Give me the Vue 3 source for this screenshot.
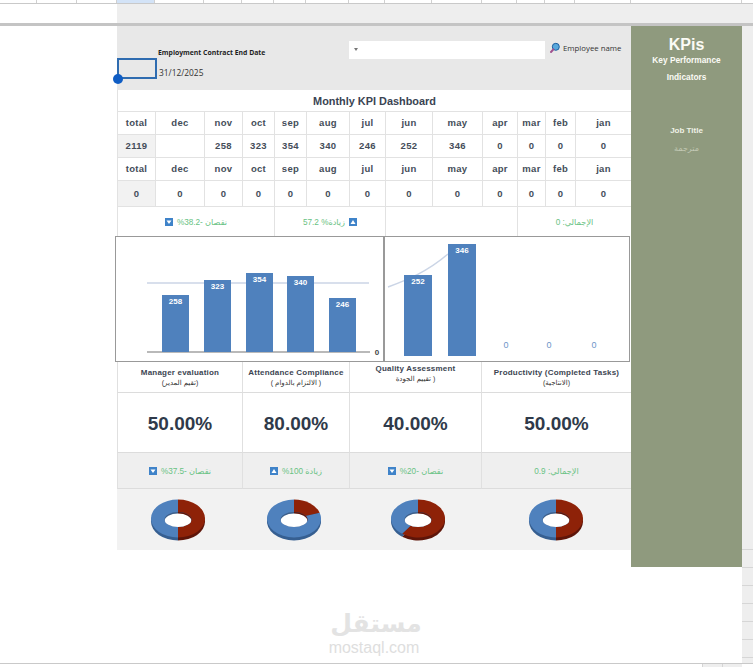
<script setup>
const months = ['total','dec','nov','oct','sep','aug','jul','jun','may','apr','mar','feb','jan']
const row1 = ['2119','','258','323','354','340','246','252','346','0','0','0','0']
const row2 = ['0','0','0','0','0','0','0','0','0','0','0','0','0']
const rulerCols = [37,40,40,38,49,38,32,32,43,36,47,50,35,28,30,56,111]
const kpis = [
  { en:'Manager evaluation', ar:'(تقيم المدير)', val:'50.00%', delta:'نقصان -37.5%', icon:'down', span:'s125', dn:'d0', frac:0.5, up:false },
  { en:'Attendance Compliance', ar:'( الالتزام بالدوام )', val:'80.00%', delta:'زيادة 100%', icon:'up', span:'s107', dn:'d1', frac:0.2, up:false },
  { en:'Quality Assessment', ar:'( تقييم الجودة', val:'40.00%', delta:'نقصان -20%', icon:'down', span:'s132', dn:'d2', frac:0.6, up:true },
  { en:'Productivity (Completed Tasks)', ar:'(الانتاجية)', val:'50.00%', delta:'الإجمالي: 0.9', icon:'', span:'s150', dn:'d3', frac:0.5, up:false },
]
const bars1 = [
  { x:46, top:58, v:258 }, { x:88, top:43, v:323 }, { x:130, top:36, v:354 }, { x:171, top:39, v:340 }, { x:213, top:61, v:246 },
]
const bars2 = [
  { x:19, top:38, v:252 }, { x:63, top:7, v:346 },
]
const zeros = [121, 164, 209]

function pt(cx, cy, rx, ry, f) {
  const a = f * Math.PI * 2
  return [(cx + rx * Math.sin(a)).toFixed(2), (cy - ry * Math.cos(a)).toFixed(2)]
}
function sector(from, to, cy) {
  const cx = 28, rx = 27, ry = 19
  const [x1, y1] = pt(cx, cy, rx, ry, from)
  const [x2, y2] = pt(cx, cy, rx, ry, to)
  const large = to - from > 0.5 ? 1 : 0
  return `M${cx} ${cy}L${x1} ${y1}A${rx} ${ry} 0 ${large} 1 ${x2} ${y2}Z`
}
</script>

<template>
  <div class="page">
    <div class="ruler">
      <span v-for="(w, i) in rulerCols" :key="i" class="rc" :class="{ sel: i === 3 }" :style="{ width: w + 'px' }"></span>
    </div>
    <div class="freeze"><div class="fz-blank"></div></div>
    <div class="bar"></div>

    <div class="sheet">
      <main class="main">
        <section class="filters">
          <div class="sel-box"><i class="handle"></i></div>
          <div class="date-col">
            <div class="date-label">Employment Contract End Date</div>
            <div class="date-val">31/12/2025</div>
          </div>
          <div class="drop"><i class="caret"></i></div>
          <svg class="lens" viewBox="0 0 12 12" width="12" height="12">
            <circle cx="6.8" cy="4.8" r="3.5" fill="#58a8dc" stroke="#1d5f9f" stroke-width="1"/>
            <path d="M4.4 7.4 2 10" stroke="#a0528f" stroke-width="2" stroke-linecap="round"/>
          </svg>
          <span class="emp">Employee name</span>
        </section>

        <div class="title">Monthly KPI Dashboard</div>

        <div class="grid h23">
          <div v-for="m in months" :key="m" class="cell up1">{{ m }}</div>
        </div>
        <div class="grid h23">
          <div v-for="(v, i) in row1" :key="i" class="cell up1" :class="{ shade: i === 0 }">{{ v }}</div>
        </div>
        <div class="grid h23">
          <div v-for="m in months" :key="m" class="cell up1">{{ m }}</div>
        </div>
        <div class="grid h26">
          <div v-for="(v, i) in row2" :key="i" class="cell" :class="{ shade: i === 0 }">{{ v }}</div>
        </div>

        <div class="deltas">
          <div class="dcell s157">
            <span class="ar" dir="rtl">نقصان -38.2%</span>
            <svg class="tri" viewBox="0 0 8 8" width="8" height="8"><rect width="8" height="8" fill="#3f83c9"/><path d="M1.5 2.5h5L4 6z" fill="#fff"/></svg>
          </div>
          <div class="dcell s111 rev">
            <span class="ar" dir="rtl">زيادة% 57.2</span>
            <svg class="tri" viewBox="0 0 8 8" width="8" height="8"><rect width="8" height="8" fill="#3f83c9"/><path d="M1.5 6h5L4 2z" fill="#fff"/></svg>
          </div>
          <div class="dcell s132"></div>
          <div class="dcell s114"><span class="ar" dir="rtl">الإجمالي: 0</span></div>
        </div>

        <div class="charts">
          <svg class="frame f1" viewBox="0 0 267 124" width="267" height="124">
            <line x1="31" y1="46" x2="253" y2="46" stroke="#cbd5e6" stroke-width="1.5"/>
            <line x1="31" y1="115" x2="254" y2="115" stroke="#b9b9b9" stroke-width="2"/>
            <g v-for="b in bars1" :key="b.v">
              <rect :x="b.x" :y="b.top" width="27" :height="115 - b.top" fill="#4f81bd"/>
              <text :x="b.x + 13.5" :y="b.top + 9" class="bar-l">{{ b.v }}</text>
            </g>
            <text x="261" y="118" class="zero dark">0</text>
          </svg>
          <svg class="frame f2" viewBox="0 0 244 124" width="244" height="124">
            <path d="M3 50C22 43 42 35 63 17" fill="none" stroke="#cbd5e6" stroke-width="1.5"/>
            <g v-for="b in bars2" :key="b.v">
              <rect :x="b.x" :y="b.top" width="28" :height="119 - b.top" fill="#4f81bd"/>
              <text :x="b.x + 14" :y="b.top + 9" class="bar-l">{{ b.v }}</text>
            </g>
            <text v-for="z in zeros" :key="z" :x="z" y="111" class="zero">0</text>
          </svg>
        </div>

        <div class="kpi-row labels">
          <div v-for="k in kpis" :key="k.en" class="kcell" :class="[k.span, { lift: k.up }]">
            <div class="ken">{{ k.en }}</div>
            <div class="kar" dir="rtl">{{ k.ar }}</div>
          </div>
        </div>
        <div class="kpi-row bigs">
          <div v-for="k in kpis" :key="k.en" class="kcell big" :class="k.span">{{ k.val }}</div>
        </div>
        <div class="kpi-row kdeltas">
          <div v-for="k in kpis" :key="k.en" class="kcell dd" :class="k.span">
            <svg v-if="k.icon === 'down'" class="tri" viewBox="0 0 8 8" width="8" height="8"><rect width="8" height="8" fill="#3f83c9"/><path d="M1.5 2.5h5L4 6z" fill="#fff"/></svg>
            <svg v-if="k.icon === 'up'" class="tri" viewBox="0 0 8 8" width="8" height="8"><rect width="8" height="8" fill="#3f83c9"/><path d="M1.5 6h5L4 2z" fill="#fff"/></svg>
            <span class="ar" dir="rtl">{{ k.delta }}</span>
          </div>
        </div>
        <div class="kpi-row donuts">
          <div v-for="(k, i) in kpis" :key="k.en" class="dnc" :class="k.dn">
            <svg viewBox="0 0 56 44" width="56" height="44">
              <defs>
                <clipPath :id="'hole' + i"><ellipse cx="28" cy="20.5" rx="13.5" ry="7.5"/></clipPath>
              </defs>
              <path :d="sector(0, k.frac, 22.5)" fill="#5e1509"/>
              <path :d="sector(k.frac, 1, 22.5)" fill="#365f91"/>
              <path :d="sector(0, k.frac, 19.5)" fill="#8e2208"/>
              <path :d="sector(k.frac, 1, 19.5)" fill="#4f81bd"/>
              <ellipse cx="28" cy="20.5" rx="13.5" ry="7.5" fill="#3e5f8a"/>
              <rect x="28" y="10" width="14" height="12" fill="#5e1509" :clip-path="'url(#hole' + i + ')'"/>
              <ellipse cx="28" cy="22" rx="13.5" ry="7.5" fill="#fff" :clip-path="'url(#hole' + i + ')'"/>
            </svg>
          </div>
        </div>

        <div class="mark">
          <div class="mark-ar" dir="rtl">مستقل</div>
          <div class="mark-en">mostaql.com</div>
        </div>
      </main>

      <aside class="side">
        <div class="kp">KPis</div>
        <div class="kps">Key Performance</div>
        <div class="kps ind">Indicators</div>
        <div class="job">Job Title</div>
        <div class="jobv" dir="rtl">مترجمة</div>
      </aside>

      <div class="band"><div class="band-lines"></div></div>
    </div>

    <div class="foot"><span class="fc"></span><span class="fc"></span></div>
  </div>
</template>

<style>
html, body { margin: 0; background: #fff; }
</style>

<style scoped>
.page {
  width: 753px; height: 667px; overflow: hidden; display: flex; flex-direction: column;
  font-family: "Liberation Sans", "DejaVu Sans", sans-serif; background: #fff; color: #3a4453;
}
.ruler { height: 4px; display: flex; border-bottom: 1px solid #c9c9c9; box-sizing: border-box; background: #fff; }
.rc { display: block; box-sizing: border-box; border-right: 1px solid #d0d0d0; }
.rc.sel { background: #d3e3f7; }
.freeze { height: 19px; background: #eeeeee; }
.fz-blank { width: 117px; height: 100%; background: #fff; }
.bar { height: 3px; background: #c4c4c4; }

.sheet { height: 637px; display: flex; padding-left: 117px; }
.main { width: 514px; display: flex; flex-direction: column; position: relative; }

.filters { height: 64px; background: #e8e8e8; display: flex; position: relative; box-sizing: border-box; }
.sel-box { width: 40px; height: 21px; box-sizing: border-box; border: 2px solid #2f6cb0; margin-top: 32px; position: relative; flex: none; }
.handle { position: absolute; left: -6px; bottom: -7px; width: 10px; height: 10px; border-radius: 50%; background: #0f5dc4; }
.date-col { margin-left: 1px; width: 191px; flex: none; font-family: "Open Sans", sans-serif; }
.date-label { margin-top: 21px; font-size: 6.85px; font-weight: 700; color: #1f1f1f; white-space: nowrap; height: 11px; line-height: 11px; }
.date-val { margin-top: 9px; padding-left: 1px; font-size: 8.4px; color: #333; line-height: 11px; }
.drop { width: 196px; height: 18px; margin-top: 15px; background: #fff; position: relative; flex: none; }
.caret { position: absolute; left: 5px; top: 7px; border: 2.5px solid transparent; border-top: 3px solid #777; }
.lens { margin-left: 4px; margin-top: 16px; flex: none; }
.emp { margin-left: 2px; margin-top: 16px; font-family: "Open Sans", sans-serif; font-size: 7.8px; color: #333; line-height: 12px; white-space: nowrap; }

.title { height: 21px; background: #fff; text-align: center; font-weight: 700; font-size: 10.9px; line-height: 22px; color: #3a4453; box-sizing: border-box; border-left: 1px solid #e2e2e2; }

.grid { display: grid; grid-template-columns: 38px 49px 38px 32px 32px 43px 36px 47px 50px 35px 28px 30px 56px; background: #fff; }
.h23 { height: 23px; }
.h26 { height: 26px; }
.cell {
  display: flex; align-items: center; justify-content: center; box-sizing: border-box;
  border-top: 1px solid #e2e2e2; border-left: 1px solid #e2e2e2;
  font-size: 9.5px; font-weight: 700; letter-spacing: 0.3px; color: #444d59;
}
.up1 { padding-bottom: 2px; }
.shade { background: #f2f2f2; }

.deltas { height: 30px; display: flex; background: #fff; }
.dcell { height: 100%; box-sizing: border-box; border-top: 1px solid #e2e2e2; border-left: 1px solid #e2e2e2; display: flex; align-items: center; justify-content: center; gap: 4px; }
.s157 { width: 157px; flex-direction: row-reverse; }
.s111 { width: 111px; }
.s132 { width: 132px; }
.s114 { width: 114px; }
.s125 { width: 125px; }
.s107 { width: 107px; }
.s150 { width: 150px; }
.d0 { width: 122px; }
.d1 { width: 110px; }
.d2 { width: 137px; }
.d3 { width: 139px; }
.ar { font-family: "Liberation Sans", "DejaVu Sans", sans-serif; font-size: 8.2px; color: #69c283; white-space: nowrap; }
.tri { flex: none; }

.charts { height: 126px; margin-left: -2px; width: 515px; display: flex; }
.frame { display: block; border: 1px solid #999; background: #fff; flex: none; }
.bar-l { font: 700 8px "Liberation Sans", sans-serif; fill: #fff; text-anchor: middle; }
.zero { font: 400 9px "Liberation Sans", sans-serif; fill: #6d95c8; text-anchor: middle; }
.zero.dark { font-weight: 700; font-size: 8px; fill: #444; }

.kpi-row { display: flex; }
.kcell { box-sizing: border-box; border-left: 1px solid #e0e0e0; border-bottom: 1px solid #dcdcdc; text-align: center; height: 100%; }
.labels { height: 31px; background: #fff; }
.labels .kcell { padding-top: 6px; }
.labels .kcell.lift { padding-top: 2px; }
.ken { font-size: 8px; font-weight: 700; letter-spacing: 0.2px; color: #3c4552; line-height: 10px; white-space: nowrap; }
.kar { font-size: 7px; color: #333; line-height: 10px; }
.bigs { height: 60px; background: #fff; }
.big { font-size: 19px; font-weight: 700; color: #2f3a4a; line-height: 61px; }
.kdeltas { height: 36px; background: #efefef; }
.dd { display: flex; align-items: center; justify-content: center; gap: 4px; }
.donuts { height: 61px; background: #f2f2f2; }
.dnc { display: flex; justify-content: center; padding-top: 10px; box-sizing: border-box; }
.dnc svg { display: block; }

.mark { position: absolute; left: 0; top: 581px; width: 100%; text-align: center; }
.mark-ar { font-family: "DejaVu Sans", sans-serif; font-size: 25px; font-weight: 700; line-height: 34px; color: #e3e3e3; transform: translateX(2px); }
.mark-en { font-size: 16px; color: #dedede; line-height: 13px; }

.side { width: 111px; height: 541px; background: #8f9a7e; color: #fbfbf5; text-align: center; flex: none; }
.kp { margin-top: 10px; font-size: 16px; font-weight: 700; line-height: 18px; }
.kps { font-size: 8.3px; font-weight: 700; line-height: 12px; }
.ind { margin-top: 5px; }
.job { margin-top: 42px; font-size: 8px; font-weight: 700; line-height: 12px; color: #f0f2e6; }
.jobv { margin-top: 6px; font-size: 8px; color: #c3c9b5; line-height: 12px; }

.band { width: 11px; height: 100%; background: #eeeeee; display: flex; flex-direction: column; justify-content: flex-end; }
.band-lines { height: 114px; background: repeating-linear-gradient(#d6d6d6 0 1px, transparent 1px 18px); }

.foot { height: 4px; border-top: 1px solid #c9c9c9; box-sizing: border-box; display: flex; justify-content: flex-end; padding-right: 11px; background: #fff; }
.fc { width: 20px; background: #eeeeee; border-left: 1px solid #d5d5d5; box-sizing: border-box; }
</style>
